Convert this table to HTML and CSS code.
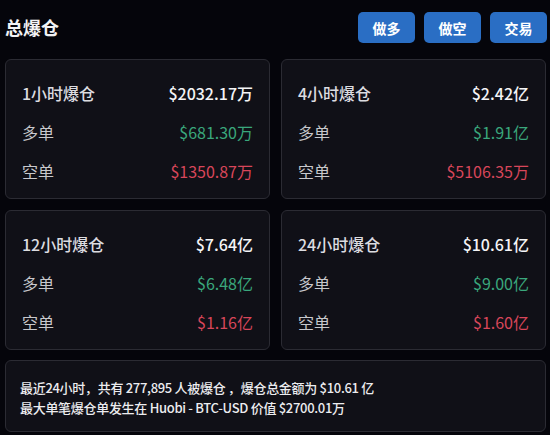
FILE: index.html
```html
<!DOCTYPE html>
<html lang="zh">
<head>
<meta charset="utf-8">
<link rel="stylesheet" href="styles.css">
</head>
<body>
<div class="page">
  <header class="top">
    <h1 class="title">总爆仓</h1>
    <div class="actions">
      <button class="btn">做多</button>
      <button class="btn">做空</button>
      <button class="btn">交易</button>
    </div>
  </header>
  <section class="grid">
    <div class="card">
      <div class="row head"><span>1小时爆仓</span><span class="val">$2032.17万</span></div>
      <div class="row"><span class="lbl">多单</span><span class="up">$681.30万</span></div>
      <div class="row"><span class="lbl">空单</span><span class="down">$1350.87万</span></div>
    </div>
    <div class="card">
      <div class="row head"><span>4小时爆仓</span><span class="val">$2.42亿</span></div>
      <div class="row"><span class="lbl">多单</span><span class="up">$1.91亿</span></div>
      <div class="row"><span class="lbl">空单</span><span class="down">$5106.35万</span></div>
    </div>
    <div class="card">
      <div class="row head"><span>12小时爆仓</span><span class="val">$7.64亿</span></div>
      <div class="row"><span class="lbl">多单</span><span class="up">$6.48亿</span></div>
      <div class="row"><span class="lbl">空单</span><span class="down">$1.16亿</span></div>
    </div>
    <div class="card">
      <div class="row head"><span>24小时爆仓</span><span class="val">$10.61亿</span></div>
      <div class="row"><span class="lbl">多单</span><span class="up">$9.00亿</span></div>
      <div class="row"><span class="lbl">空单</span><span class="down">$1.60亿</span></div>
    </div>
  </section>
  <section class="summary">
    <p>最近24小时，共有 277,895 人被爆仓 ，爆仓总金额为 $10.61 亿</p>
    <p>最大单笔爆仓单发生在 Huobi - BTC-USD 价值 $2700.01万</p>
  </section>
</div>
</body>
</html>
```

FILE: styles.css
```css
* { box-sizing: border-box; margin: 0; padding: 0; }
html, body { background: #05050b; }
body {
  font-family: "Noto Sans CJK SC", "Noto Sans", sans-serif;
  color: #e8e8ec;
  width: 550px;
  height: 435px;
  overflow: hidden;
}
.page { padding: 12px 3px 0 5px; }
.top {
  display: flex;
  justify-content: space-between;
  align-items: center;
  height: 31px;
}
.title {
  font-size: 18px;
  font-weight: 700;
  color: #f2f2f4;
  line-height: 1;
  margin-top: -2px;
}
.actions { display: flex; gap: 9px; }
.btn {
  width: 57px;
  height: 31px;
  border: none;
  border-radius: 5px;
  background: #2a6ec4;
  color: #fff;
  font-family: inherit;
  font-size: 14px;
  font-weight: 700;
}
.grid {
  display: grid;
  grid-template-columns: 265px 265px;
  column-gap: 11px;
  row-gap: 11px;
  margin-top: 16px;
}
.card {
  height: 140px;
  background: #101017;
  border: 1px solid #2b2b33;
  border-radius: 6px;
  padding: 21px 16px 0 16px;
  display: flex;
  flex-direction: column;
  gap: 15px;
}
.row {
  display: flex;
  justify-content: space-between;
  align-items: center;
  height: 24px;
  font-size: 16px;
  color: #c8c8cc;
}
.head { color: #dcdce0; font-weight: 500; }
.val { color: #f4f4f6; font-weight: 500; }
.up { color: #3aa77c; }
.down { color: #d8465a; }
.summary {
  margin-top: 10px;
  margin-right: 1px;
  height: 72px;
  background: #101017;
  border: 1px solid #2b2b33;
  border-radius: 6px;
  padding: 17px 14px;
  font-size: 13px;
  font-weight: 500;
  letter-spacing: -0.3px;
  color: #ececef;
  line-height: 20px;
}
```
